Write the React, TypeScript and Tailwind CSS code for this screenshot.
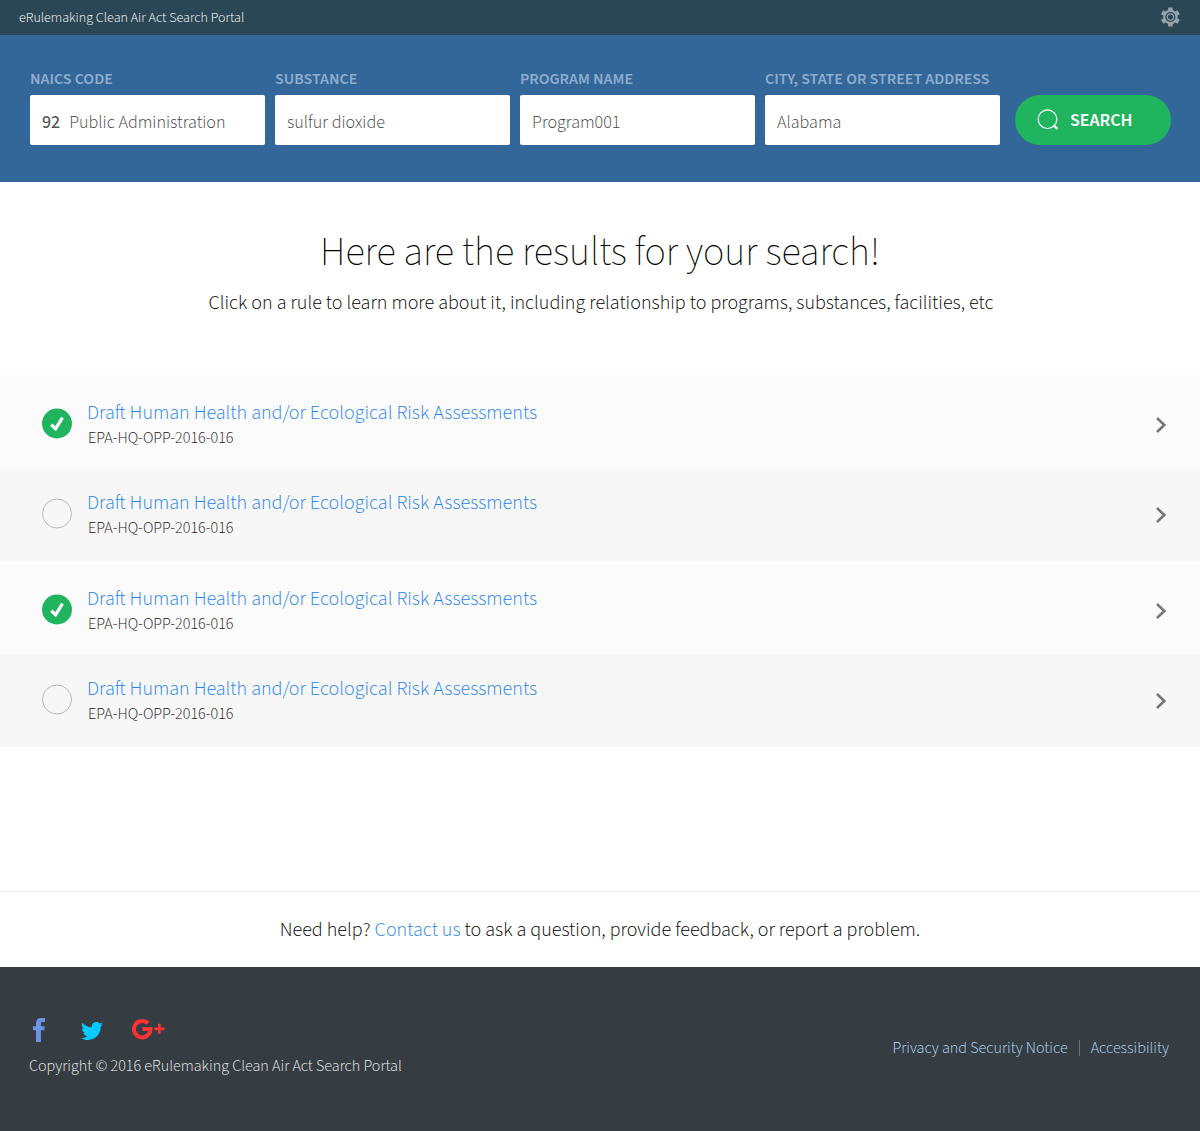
type Field = { label: string; value: string; code?: string };

const fields: Field[] = [
  { label: "NAICS CODE", code: "92", value: "Public Administration" },
  { label: "SUBSTANCE", value: "sulfur dioxide" },
  { label: "PROGRAM NAME", value: "Program001" },
  { label: "CITY, STATE OR STREET ADDRESS", value: "Alabama" },
];

const results = [
  { title: "Draft Human Health and/or Ecological Risk Assessments", id: "EPA-HQ-OPP-2016-016", checked: true },
  { title: "Draft Human Health and/or Ecological Risk Assessments", id: "EPA-HQ-OPP-2016-016", checked: false },
  { title: "Draft Human Health and/or Ecological Risk Assessments", id: "EPA-HQ-OPP-2016-016", checked: true },
  { title: "Draft Human Health and/or Ecological Risk Assessments", id: "EPA-HQ-OPP-2016-016", checked: false },
];

function GearIcon() {
  return (
    <svg width="20" height="20" viewBox="0 0 20 20" fill="none" stroke="#95a3aa">
      <circle cx="10.4" cy="10" r="6.2" strokeWidth="2.2" />
      <circle cx="10.4" cy="10" r="3.2" strokeWidth="1.2" />
      {[0, 60, 120].map((angle) => (
        <path key={angle} d="M10.4 0.5V3.4M10.4 16.6V19.5" strokeWidth="4.6" transform={`rotate(${angle} 10.4 10)`} />
      ))}
    </svg>
  );
}

function SearchIcon() {
  return (
    <svg width="22" height="22" viewBox="0 0 22 22" fill="none" stroke="#fff">
      <circle cx="10.5" cy="10.2" r="9.3" strokeWidth="1.2" />
      <path d="M16.8 16.5L20.4 19.9" strokeWidth="2.2" />
    </svg>
  );
}

function StatusMark({ checked }: { checked: boolean }) {
  return (
    <svg width="30" height="31" viewBox="0 0 30 31" fill="none">
      {checked ? (
        <>
          <circle cx="15" cy="15.5" r="15" fill="#20b45e" />
          <path d="M9.2 16.8L13.6 20.8L20.5 9.6" stroke="#fff" strokeWidth="3.2" />
        </>
      ) : (
        <circle cx="15" cy="15.5" r="14.5" stroke="#b9b9b9" />
      )}
    </svg>
  );
}

function FacebookIcon() {
  return (
    <svg width="12" height="24" viewBox="0 0 12 24" fill="#6b93e6">
      <path d="M3 24V12.2H0V8.2H3V5.4C3 1.8 4.9 0 8.2 0H12V4.1H9.6C8.3 4.1 7.9 4.7 7.9 5.8V8.2H11.7L11.2 12.2H7.9V24Z" />
    </svg>
  );
}

function TwitterIcon() {
  return (
    <svg width="22" height="18" viewBox="0 48 512 416" preserveAspectRatio="none" fill="#00ccff">
      <path d="M459.37 151.716c.325 4.548.325 9.097.325 13.645 0 138.72-105.583 298.558-298.558 298.558-59.452 0-114.68-17.219-161.137-47.106 8.447.974 16.568 1.299 25.34 1.299 49.055 0 94.213-16.568 130.274-44.832-46.132-.975-84.792-31.188-98.112-72.772 6.498.974 12.995 1.624 19.818 1.624 9.421 0 18.843-1.3 27.614-3.573-48.081-9.747-84.143-51.98-84.143-102.985v-1.299c13.969 7.797 30.214 12.67 47.431 13.319-28.264-18.843-46.781-51.005-46.781-87.391 0-19.492 5.197-37.36 14.294-52.954 51.655 63.675 129.3 105.258 216.365 109.807-1.624-7.797-2.599-15.918-2.599-24.04 0-57.828 46.782-104.934 104.934-104.934 30.213 0 57.502 12.67 76.67 33.137 23.715-4.548 46.456-13.32 66.599-25.34-7.798 24.366-24.366 44.833-46.132 57.827 21.117-2.273 41.584-8.122 60.426-16.243-14.292 20.791-32.161 39.308-52.628 54.253z" />
    </svg>
  );
}

function GooglePlusIcon() {
  return (
    <svg width="33" height="21" viewBox="0 0 33 21" fill="none" stroke="#ff3131">
      <path d="M16 4.4A8.2 8.2 0 1 0 18.4 10.1H10.4" strokeWidth="4" />
      <path d="M27.3 4.8V14.8M22.3 9.8H32.4" strokeWidth="2.7" />
    </svg>
  );
}

export default function App() {
  return (
    <div className="flex min-h-[1131px] w-[1200px] flex-col bg-white font-['Source_Sans_3','Noto_Sans_CJK_SC',sans-serif] font-light">
      <header className="flex h-[35px] items-center justify-between bg-[#2b4755] pr-5 pb-px pl-[19px]">
        <span className="pt-px text-sm text-white">eRulemaking Clean Air Act Search Portal</span>
        <GearIcon />
      </header>

      <form className="flex h-[147px] gap-2.5 bg-[#336699] pt-9 pl-[30px]">
        {fields.map((field) => (
          <div key={field.label} className="flex w-[235px] shrink-0 flex-col">
            <span className="h-6 text-base leading-4 font-semibold whitespace-nowrap text-[#8fadcd]">{field.label}</span>
            <div className="flex h-[50px] items-center rounded-xs bg-white px-3 pt-[5px] text-lg text-[#444]">
              {field.code && <span className="mr-[9px] font-medium text-[#555]">{field.code}</span>}
              <span>{field.value}</span>
            </div>
          </div>
        ))}
        <button type="button" className="mt-6 ml-[5px] flex h-[50px] w-[156px] shrink-0 items-center rounded-full bg-[#20b45e] pl-[22px] text-lg font-semibold text-white">
          <SearchIcon />
          <span className="mt-0.5 ml-[11px]">SEARCH</span>
        </button>
      </form>

      <main className="flex flex-1 flex-col text-black">
        <div className="flex h-[193px] flex-col items-center pt-[47px]">
          <h1 className="text-[40px] leading-[48px] font-extralight">Here are the results for your search!</h1>
          <p className="mt-3 pl-0.5 text-xl leading-7">
            Click on a rule to learn more about it, including relationship to programs, substances, facilities, etc
          </p>
        </div>

        <ul>
          {results.map((result, i) => (
            <li key={i} className="flex h-[93px] items-start pr-[33px] pl-[42px] odd:bg-[#fbfbfb] odd:pt-[26px] even:bg-[#f7f7f7] even:pt-[23px]">
              <div className="mt-[7px]">
                <StatusMark checked={result.checked} />
              </div>
              <div className="ml-[15px] flex-1">
                <a href="#" className="block text-xl leading-6 text-[#1f84ee]">{result.title}</a>
                <p className="mt-px ml-px text-base leading-6 text-[#222]">{result.id}</p>
              </div>
              <svg className="mt-4" width="12" height="16" viewBox="0 0 12 16" fill="none" stroke="#777" strokeWidth="2.6">
                <path d="M2 1L9.3 8L2 15" />
              </svg>
            </li>
          ))}
        </ul>

        <p className="mt-36 h-[76px] border-t border-[#ececec] pt-6 text-center text-xl leading-7">
          Need help? <a href="#" className="text-[#1f84ee]">Contact us</a> to ask a question, provide feedback, or report a problem.
        </p>
      </main>

      <footer className="flex h-[164px] justify-between bg-[#353c42] pr-[31px] pl-[29px]">
        <div className="pt-[51px]">
          <div className="flex h-6 items-start pl-1">
            <FacebookIcon />
            <div className="mt-1 ml-9"><TwitterIcon /></div>
            <div className="mt-px ml-[29px]"><GooglePlusIcon /></div>
          </div>
          <p className="mt-3 text-base leading-6 text-[#eee]">Copyright © 2016 eRulemaking Clean Air Act Search Portal</p>
        </div>
        <nav className="mt-[69px] flex h-6 items-center text-base text-[#b4dcff]">
          <a href="#">Privacy and Security Notice</a>
          <span className="mr-[11px] ml-[11px] h-4 w-px bg-[#6b7177]" />
          <a href="#">Accessibility</a>
        </nav>
      </footer>
    </div>
  );
}
